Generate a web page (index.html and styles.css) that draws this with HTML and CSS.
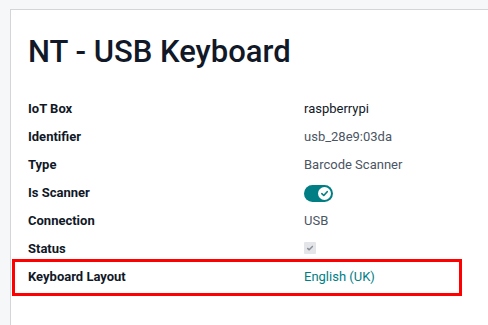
FILE: index.html
```html
<!DOCTYPE html>
<html>
<head>
  <title>NT - USB Keyboard</title>
  <link rel="stylesheet" href="styles.css">
</head>
<body>
  <div class="sheet">
    <h1 class="title">NT - USB Keyboard</h1>
    <div class="fields">
      <div class="row">
        <div class="label">IoT Box</div>
        <div class="value value-link">raspberrypi</div>
      </div>
      <div class="row">
        <div class="label">Identifier</div>
        <div class="value">usb_28e9:03da</div>
      </div>
      <div class="row">
        <div class="label">Type</div>
        <div class="value">Barcode Scanner</div>
      </div>
      <div class="row">
        <div class="label">Is Scanner</div>
        <div class="value">
          <span class="toggle">
            <span class="knob">
              <svg width="9" height="9" viewBox="0 0 10 10"><path d="M2 5.2 L4.2 7.2 L8 3" fill="none" stroke="#017e84" stroke-width="1.8" stroke-linecap="round" stroke-linejoin="round"/></svg>
            </span>
          </span>
        </div>
      </div>
      <div class="row">
        <div class="label">Connection</div>
        <div class="value">USB</div>
      </div>
      <div class="row">
        <div class="label">Status</div>
        <div class="value">
          <span class="checkbox">
            <svg width="8" height="8" viewBox="0 0 10 10"><path d="M2 5.5 L4 7.3 L8 3" fill="none" stroke="#8a8f98" stroke-width="1.8" stroke-linecap="round" stroke-linejoin="round"/></svg>
          </span>
        </div>
      </div>
      <div class="row highlighted">
        <div class="label">Keyboard Layout</div>
        <div class="value value-teal">English (UK)</div>
      </div>
    </div>
  </div>
</body>
</html>
```
FILE: styles.css
```css
html, body {
  height: 100%;
}

body {
  margin: 0;
  background-color: #f6f7f9;
  font-family: Roboto, "Liberation Sans", sans-serif;
  overflow: hidden;
}

.sheet {
  margin: 9px 0 0 10px;
  height: calc(100% - 9px);
  background-color: #fff;
  border-top: 1px solid #d3d5d9;
  border-left: 1px solid #d3d5d9;
  padding: 23px 0 0 17px;
  box-sizing: border-box;
}

.title {
  margin: 0;
  font-size: 31px;
  line-height: 38px;
  font-weight: 500;
  color: #111827;
}

.fields {
  margin-top: 24px;
}

.row {
  display: grid;
  grid-template-columns: 276px 1fr;
  height: 28px;
  align-items: center;
  font-size: 13px;
  line-height: 28px;
}

.label {
  font-weight: 700;
  color: #111827;
}

.value {
  color: #4b5563;
  display: flex;
  align-items: center;
}

.value-link {
  color: #111827;
}

.value-teal {
  color: #017e84;
}

.toggle {
  width: 29px;
  height: 17px;
  border-radius: 9px;
  background-color: #017e84;
  display: flex;
  align-items: center;
  justify-content: flex-end;
  padding-right: 2px;
  box-sizing: border-box;
}

.knob {
  width: 13px;
  height: 13px;
  border-radius: 50%;
  background-color: #fff;
  display: flex;
  align-items: center;
  justify-content: center;
}

.checkbox {
  width: 12px;
  height: 12px;
  border-radius: 1px;
  background-color: #e4e5e8;
  display: flex;
  align-items: center;
  justify-content: center;
  margin-top: -2px;
}

.highlighted {
  position: relative;
}

/* annotation box around the keyboard layout row */
.highlighted::after {
  content: "";
  position: absolute;
  left: -16px;
  top: -4px;
  width: 444px;
  height: 31px;
  border: 3px solid #ff0000;
}
```
